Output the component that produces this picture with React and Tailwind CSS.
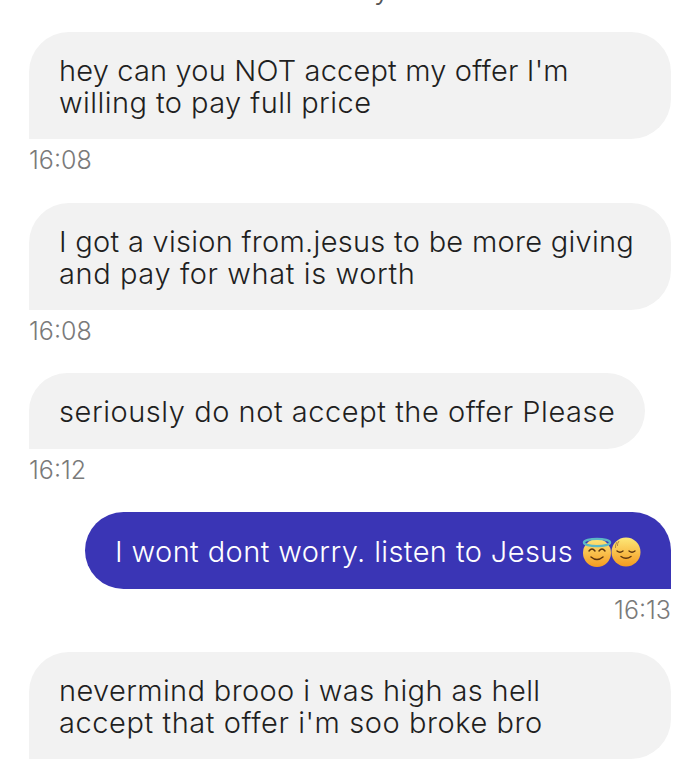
const mensajes = [
  {
    id: 1,
    lineas: [
      ["hey can you NOT accept my offer I'm", 'tracking-[0.17px]'],
      ['willing to pay full price', 'tracking-[0.44px]'],
    ],
    hora: '16:08',
    margen: 'mb-[30px]',
  },
  {
    id: 2,
    lineas: [
      ['I got a vision from.jesus to be more giving', 'tracking-[0.28px]'],
      ['and pay for what is worth', 'tracking-[0.6px]'],
    ],
    hora: '16:08',
    margen: 'mb-[29px]',
  },
  {
    id: 3,
    lineas: [['seriously do not accept the offer Please', 'tracking-[0.55px]']],
    hora: '16:12',
    ancho: 'w-[616px]',
    margen: 'mb-[29px]',
  },
]

function CaraAngel() {
  return (
    <svg width="30" height="30" viewBox="0 0 30 30" className="shrink-0">
      <defs>
        <linearGradient id="cara1" x1="0" y1="0" x2="0" y2="1">
          <stop offset="0" stopColor="#fde67a" />
          <stop offset="1" stopColor="#f59a20" />
        </linearGradient>
      </defs>
      <circle cx="15" cy="16" r="14" fill="url(#cara1)" />
      <ellipse cx="15" cy="5.500" rx="13" ry="3.600" fill="none" stroke="#5cb8c4" strokeWidth="2.400" />
      <path d="M7 14q3-4 6 0M17 14q3-4 6 0" fill="none" stroke="#5a3410" strokeWidth="1.400" strokeLinecap="round" />
      <path d="M9 20q6 5 12 0" fill="none" stroke="#5a3410" strokeWidth="1.500" strokeLinecap="round" />
    </svg>
  )
}

function CaraAliviada() {
  return (
    <svg width="30" height="30" viewBox="0 0 30 30" className="-ml-[1px] shrink-0">
      <defs>
        <linearGradient id="cara2" x1="0" y1="0" x2="0" y2="1">
          <stop offset="0" stopColor="#fde878" />
          <stop offset="1" stopColor="#f59a20" />
        </linearGradient>
      </defs>
      <circle cx="15" cy="15" r="14.500" fill="url(#cara2)" />
      <path d="M6 14q3 2.500 6 0M18 14q3 2.500 6 0" fill="none" stroke="#5a3410" strokeWidth="1.300" strokeLinecap="round" />
      <path d="M10 19.500q5 3.500 10 0" fill="none" stroke="#5a3410" strokeWidth="1.400" strokeLinecap="round" />
      <path d="M6 5q-2 3-1.500 6M8 4q-2 3-1.500 5" fill="none" stroke="#a8763a" strokeWidth="0.800" />
    </svg>
  )
}

function Burbuja({ lineas, ancho = 'w-full' }) {
  return (
    <div className={`${ancho} min-h-[76px] rounded-t-[40px] rounded-br-[40px] bg-[#f2f2f2] px-[30px] pt-[23px] pb-[20px] text-[#1f1f1f]`}>
      {lineas.map(([texto, espaciado]) => (
        <p key={texto} className={`whitespace-nowrap ${espaciado}`}>{texto}</p>
      ))}
    </div>
  )
}

function App() {
  return (
    <div className="h-[766px] w-[700px] overflow-hidden bg-white px-[29px] font-['Inter',sans-serif] text-[29px] leading-[32px] font-light tracking-[0.4px]">
      <div className="h-[32px] overflow-hidden">
        <p className="-mt-[27px] pl-[345px] text-[#555]">y</p>
      </div>

      {mensajes.map((mensaje) => (
        <div key={mensaje.id} className={mensaje.margen}>
          <Burbuja lineas={mensaje.lineas} ancho={mensaje.ancho} />
          <p className="mt-[8px] text-[25px] leading-[26px] tracking-normal text-[#7a7a7a]">{mensaje.hora}</p>
        </div>
      ))}

      <div className="mb-[29px] flex flex-col items-end">
        <div className="flex h-[77px] w-[586px] items-center rounded-t-[40px] rounded-bl-[40px] bg-[#3a35b5] px-[30px] pt-[3px] text-white">
          <span className="whitespace-nowrap">I wont dont worry. listen to Jesus</span>
          <span className="ml-[9px] flex items-center">
            <CaraAngel />
            <CaraAliviada />
          </span>
        </div>
        <p className="mt-[8px] text-[25px] leading-[26px] tracking-normal text-[#7a7a7a]">16:13</p>
      </div>

      <Burbuja
        lineas={[
          ['nevermind brooo i was high as hell', 'tracking-[0.37px]'],
          ["accept that offer i'm soo broke bro", 'tracking-[0.57px]'],
        ]}
      />
    </div>
  )
}

export default App
